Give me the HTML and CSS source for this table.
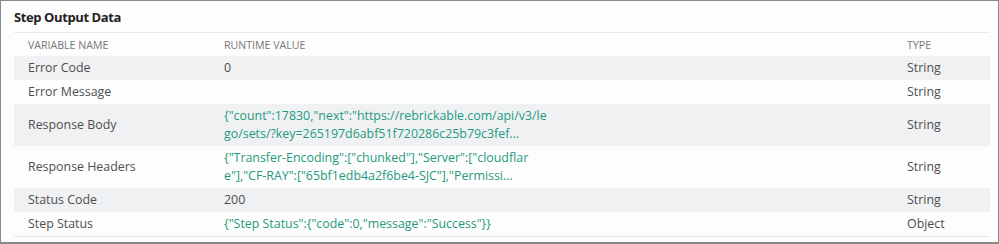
FILE: index.html
```html
<!DOCTYPE html>
<html>
<head>
  <meta charset="UTF-8">
  <title>Step Output Data</title>
  <link rel="stylesheet" href="styles.css">
</head>
<body>
  <div class="panel">
    <h2 class="panel-title">Step Output Data</h2>

    <div class="output-table">
      <div class="row head">
        <div>Variable Name</div>
        <div>Runtime Value</div>
        <div>Type</div>
      </div>
      <div class="row odd">
        <div>Error Code</div>
        <div>0</div>
        <div>String</div>
      </div>
      <div class="row">
        <div>Error Message</div>
        <div></div>
        <div>String</div>
      </div>
      <div class="row odd">
        <div>Response Body</div>
        <div class="json"><span class="wrap">{"count":17830,"next":"https://rebrickable.com/api/v3/lego/sets/?key=265197d6abf51f720286c25b79c3fef...</span></div>
        <div>String</div>
      </div>
      <div class="row">
        <div>Response Headers</div>
        <div class="json"><span class="wrap">{"Transfer-Encoding":["chunked"],"Server":["cloudflare"],"CF-RAY":["65bf1edb4a2f6be4-SJC"],"Permissi...</span></div>
        <div>String</div>
      </div>
      <div class="row odd">
        <div>Status Code</div>
        <div>200</div>
        <div>String</div>
      </div>
      <div class="row">
        <div>Step Status</div>
        <div class="json">{"Step Status":{"code":0,"message":"Success"}}</div>
        <div>Object</div>
      </div>
    </div>
  </div>
</body>
</html>
```

FILE: styles.css
```css
html, body {
  margin: 0;
  padding: 0;
}

body {
  font-family: 'Open Sans', 'Noto Sans', sans-serif;
  color: #4f4f4f;
  background: #fff;
}

.panel {
  box-sizing: border-box;
  width: 999px;
  height: 244px;
  border: 1px solid #8a8a8a;
  border-bottom-width: 2px;
  background: #fdfdfd;
  padding: 0 8px 0 13px;
}

.panel-title {
  margin: 0;
  padding: 6px 0 0;
  height: 25px;
  font-size: 13px;
  font-weight: 700;
  letter-spacing: -0.4px;
  color: #222;
  line-height: 20px;
}

.output-table {
  width: 976px;
  border-top: 1px solid #e8e9eb;
  border-bottom: 1px solid #e4e5e7;
}

.row {
  display: grid;
  grid-template-columns: 196px 683px 1fr;
  padding: 3px 0 3px 14px;
  font-size: 12.4px;
  line-height: 18px;
  align-items: center;
}

.row.odd {
  background: #f0f1f3;
}

.row.head {
  font-size: 10.6px;
  text-transform: uppercase;
  color: #777;
  padding: 3px 0 2px 14px;
}

.json {
  color: #1f9a80;
}

.wrap {
  display: block;
  width: 324px;
  word-break: break-all;
}
```
